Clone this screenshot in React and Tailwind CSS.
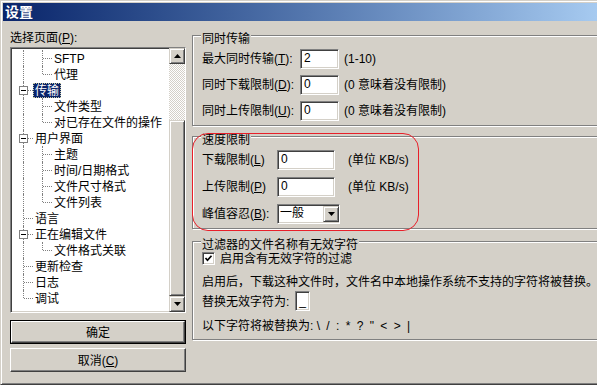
import React from 'react';

const tree = [
    { label: 'SFTP', level: 2 },
    { label: '代理', level: 2, lastChild: true },
    { label: '传输', level: 1, box: true, selected: true },
    { label: '文件类型', level: 2 },
    { label: '对已存在文件的操作', level: 2, lastChild: true },
    { label: '用户界面', level: 1, box: true },
    { label: '主题', level: 2 },
    { label: '时间/日期格式', level: 2 },
    { label: '文件尺寸格式', level: 2 },
    { label: '文件列表', level: 2, lastChild: true },
    { label: '语言', level: 1 },
    { label: '正在编辑文件', level: 1, box: true },
    { label: '文件格式关联', level: 2, lastChild: true },
    { label: '更新检查', level: 1 },
    { label: '日志', level: 1 },
    { label: '调试', level: 1, last: true },
];

const raised =
    'bg-[#d4d0c8] border border-t-[#d4d0c8] border-l-[#d4d0c8] border-r-[#404040] border-b-[#404040] shadow-[inset_1px_1px_0_#fff,inset_-1px_-1px_0_#808080]';
const pushBtn =
    'bg-[#d4d0c8] border border-t-white border-l-white border-r-[#404040] border-b-[#404040] shadow-[inset_-1px_-1px_0_#808080]';
const sunken =
    'bg-white border border-t-[#808080] border-l-[#808080] border-r-white border-b-white shadow-[inset_1px_1px_0_#404040,inset_-1px_-1px_0_#d4d0c8]';

const Arrow = ({ up }) => (
    <svg width="7" height="4" viewBox="0 0 7 4">
        <polygon points={up ? '3.5,0 7,4 0,4' : '0,0 7,0 3.5,4'} fill="#000" />
    </svg>
);

const TreeRow = ({ item }) => (
    <div className={`relative h-[16px] flex items-center ${item.level === 1 ? 'pl-[22px]' : 'pl-[41px]'}`}>
        <span className={`absolute left-[12px] top-0 w-0 border-l border-dotted border-[#808080] ${item.last ? 'h-[8px]' : 'h-[16px]'}`} />
        {item.level === 1 ? (
            <span className="absolute left-[13px] top-[8px] w-[9px] h-0 border-t border-dotted border-[#808080]" />
        ) : (
            <>
                <span className={`absolute left-[31px] top-0 w-0 border-l border-dotted border-[#808080] ${item.lastChild ? 'h-[8px]' : 'h-[16px]'}`} />
                <span className="absolute left-[32px] top-[8px] w-[9px] h-0 border-t border-dotted border-[#808080]" />
            </>
        )}
        {item.box && (
            <span className="absolute left-[8px] top-[4px] w-[9px] h-[9px] border border-[#808080] bg-white flex items-center justify-center">
                <span className="w-[5px] h-px bg-black" />
            </span>
        )}
        <span
            className={`relative h-[15px] leading-[14px] px-[1px] border whitespace-nowrap ${
                item.selected
                    ? 'bg-[#0a246a] text-white border-dotted border-[#c8c8a0]'
                    : 'border-transparent'
            }`}
        >
            {item.label}
        </span>
    </div>
);

const Group = ({ title, className, children }) => (
    <div className={`relative border border-[#808080] shadow-[1px_1px_0_#fff,inset_1px_1px_0_#fff] pl-[9px] ${className}`}>
        <span className="absolute -top-[4px] left-[8px] px-[1px] bg-[#d4d0c8] leading-[14px] whitespace-nowrap">
            {title}
        </span>
        {children}
    </div>
);

const Field = ({ className, children }) => (
    <div className={`${sunken} h-[20px] pl-[3px] leading-[17px] ${className}`}>{children}</div>
);

const App = () => {
    return (
        <div className="w-[597px] h-[385px] overflow-hidden bg-[#d4d0c8] border-t border-l border-b border-t-[#d4d0c8] border-l-[#d4d0c8] border-b-[#404040] shadow-[inset_1px_1px_0_#fff,inset_0_-1px_0_#808080] pt-[2px] pl-[2px] font-['Liberation_Sans','Noto_Sans_CJK_SC',sans-serif] text-[12px] text-black">
            <div className="h-[18px] bg-linear-to-r from-[#0a246a] to-[#a6caf0] pl-[2px] flex items-center">
                <span className="text-white font-bold text-[14px] leading-[18px]">设置</span>
            </div>

            <div className="flex">
                {/* left column */}
                <div className="ml-[7px] w-[176px] shrink-0 pt-[10px]">
                    <p className="leading-[14px] mb-[2px]">
                        选择页面(<u>P</u>):
                    </p>
                    <div className={`${sunken} h-[266px] flex`}>
                        <div className="flex-1 pt-[2px] overflow-hidden">
                            {tree.map((item) => (
                                <TreeRow key={item.label} item={item} />
                            ))}
                        </div>
                        <div className="w-[16px] flex flex-col">
                            <div className={`${raised} h-[16px] flex items-center justify-center`}>
                                <Arrow up />
                            </div>
                            <div className="h-[56px] bg-[repeating-conic-gradient(#d4d0c8_0%_25%,#ffffff_0%_50%)] bg-size-[2px_2px]" />
                            <div className={`${raised} flex-1`} />
                            <div className={`${raised} h-[16px] flex items-center justify-center`}>
                                <Arrow />
                            </div>
                        </div>
                    </div>

                    <div className="mt-[7px] h-[24px] border border-black flex">
                        <div className={`${pushBtn} flex-1 flex items-center justify-center leading-[14px] pt-[1px]`}>确定</div>
                    </div>
                    <div className={`${pushBtn} mt-[4px] h-[24px] flex items-center justify-center leading-[14px] pt-[1px]`}>
                        取消(<u>C</u>)
                    </div>
                </div>

                {/* right column */}
                <div className="ml-[6px] w-[420px] shrink-0 pt-[14px]">
                    <Group title="同时传输" className="pt-[12px] pb-[5px] flex flex-col gap-[6px]">
                        <div className="flex items-center h-[20px] pt-[1px]">
                            <span className="w-[98px] whitespace-nowrap">
                                最大同时传输(<u>T</u>):
                            </span>
                            <Field className="w-[39px]">2</Field>
                            <span className="ml-[5px]">(1-10)</span>
                        </div>
                        <div className="flex items-center h-[20px] pt-[1px]">
                            <span className="w-[98px] whitespace-nowrap">
                                同时下载限制(<u>D</u>):
                            </span>
                            <Field className="w-[39px]">0</Field>
                            <span className="ml-[5px] whitespace-nowrap">(0 意味着没有限制)</span>
                        </div>
                        <div className="flex items-center h-[20px] pt-[1px]">
                            <span className="w-[98px] whitespace-nowrap">
                                同时上传限制(<u>U</u>):
                            </span>
                            <Field className="w-[39px]">0</Field>
                            <span className="ml-[5px] whitespace-nowrap">(0 意味着没有限制)</span>
                        </div>
                    </Group>

                    <Group title="速度限制" className="mt-[10px] pt-[12px] pb-[5px] flex flex-col gap-[7px]">
                        <div className="absolute -top-[4px] -left-[1px] w-[227px] h-[98px] rounded-[16px] border border-[#e8202a] pointer-events-none" />
                        <div className="flex items-center h-[20px] pt-[1px]">
                            <span className="w-[75px] whitespace-nowrap">
                                下载限制(<u>L</u>)
                            </span>
                            <Field className="w-[58px]">0</Field>
                            <span className="ml-[13px] whitespace-nowrap">(单位 KB/s)</span>
                        </div>
                        <div className="flex items-center h-[20px] pt-[1px]">
                            <span className="w-[75px] whitespace-nowrap">
                                上传限制(<u>P</u>)
                            </span>
                            <Field className="w-[58px]">0</Field>
                            <span className="ml-[13px] whitespace-nowrap">(单位 KB/s)</span>
                        </div>
                        <div className="flex items-center h-[20px] pt-[1px]">
                            <span className="w-[75px] whitespace-nowrap">
                                峰值容忍(<u>B</u>):
                            </span>
                            <div className={`${sunken} w-[63px] h-[20px] flex items-center pl-[2px]`}>
                                <span className="flex-1 leading-[17px]">一般</span>
                                <div className={`${raised} w-[16px] h-[16px] flex items-center justify-center`}>
                                    <Arrow />
                                </div>
                            </div>
                        </div>
                    </Group>

                    <Group title="过滤器的文件名称有无效字符" className="mt-[12px] pt-[9px] pb-[6px]">
                        <div className="flex items-center h-[14px]">
                            <div className={`${sunken} w-[13px] h-[13px] flex items-center justify-center`}>
                                <svg width="9" height="9" viewBox="0 0 9 9">
                                    <polyline points="1.5,4 3.5,6.2 7.5,1.8" fill="none" stroke="#000" strokeWidth="1.7" />
                                </svg>
                            </div>
                            <span className="ml-[5px] leading-[14px] pt-[1px]">启用含有无效字符的过滤</span>
                        </div>
                        <p className="mt-[10px] leading-[14px] whitespace-nowrap">
                            启用后，下载这种文件时，文件名中本地操作系统不支持的字符将被替换。
                        </p>
                        <div className="mt-[2px] flex items-center h-[20px]">
                            <span className="w-[93px] whitespace-nowrap pt-[1px]">替换无效字符为:</span>
                            <div className={`${sunken} w-[15px] h-[20px] flex items-end justify-center leading-[16px] pb-[1px]`}>
                                _
                            </div>
                        </div>
                        <p className="mt-[8px] leading-[14px] whitespace-nowrap">
                            以下字符将被替换为:{' '}
                            <span className="tracking-[1.5px]">\ / : * ? " &lt; &gt; |</span>
                        </p>
                    </Group>
                </div>
            </div>
        </div>
    );
};

export default App;
